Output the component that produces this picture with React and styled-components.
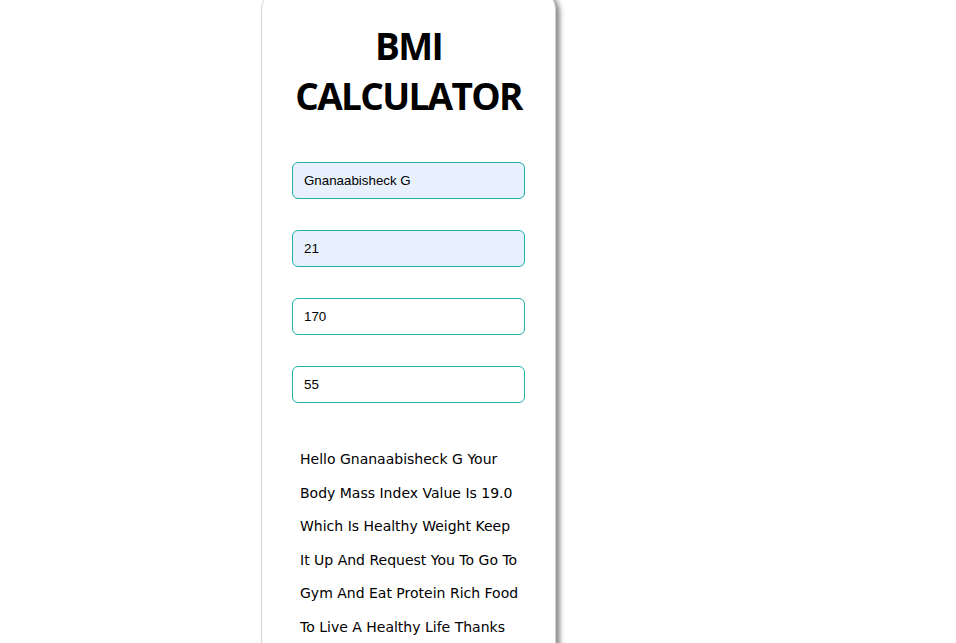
import React from "react";
import styled, { createGlobalStyle } from "styled-components";

const GlobalStyle = createGlobalStyle`
  html, body {
    margin: 0;
    padding: 0;
    background: #fff;
    overflow: hidden;
  }
`;

const fields = [
  { value: "Gnanaabisheck G", filled: true },
  { value: "21", filled: true },
  { value: "170", filled: false },
  { value: "55", filled: false },
];

const resultLines = [
  "Hello Gnanaabisheck G Your",
  "Body Mass Index Value Is 19.0",
  "Which Is Healthy Weight Keep",
  "It Up And Request You To Go To",
  "Gym And Eat Protein Rich Food",
  "To Live A Healthy Life Thanks",
];

const App = () => {
  return (
    <>
      <GlobalStyle />
      <Card>
        <Title>
          BMI
          <br />
          CALCULATOR
        </Title>
        <Form>
          {fields.map((f, i) => (
            <Field key={i} $filled={f.filled} defaultValue={f.value} />
          ))}
        </Form>
        <Result>
          {resultLines.map(line => (
            <Line key={line}>{line}</Line>
          ))}
        </Result>
      </Card>
    </>
  );
};

export default App;

const Card = styled.div`
  box-sizing: border-box;
  width: 295px;
  height: 700px;
  margin: -12px 0 0 261px;
  padding: 32px 30px 0 30px;
  background: #fff;
  border: 1px solid #d6d6d6;
  border-radius: 22px;
  box-shadow: 4px 3px 5px rgba(0, 0, 0, 0.45);
`;

const Title = styled.h1`
  margin: 0 -20px;
  text-align: center;
  font-family: "Open Sans", "Noto Sans", sans-serif;
  font-weight: 700;
  font-size: 37px;
  letter-spacing: -1.7px;
  line-height: 50px;
  color: #000;
`;

const Form = styled.div`
  display: flex;
  flex-direction: column;
  gap: 31px;
  margin-top: 41px;
`;

const Field = styled.input`
  box-sizing: border-box;
  width: 233px;
  height: 37px;
  padding: 0 11px;
  border: 1px solid #20b2aa;
  border-radius: 6px;
  outline: none;
  background: ${props => (props.$filled ? "#e8f0fe" : "#fff")};
  font-family: "Liberation Sans", Arial, sans-serif;
  font-size: 13.33px;
  color: #000;
`;

const Result = styled.div`
  margin-top: 40px;
  padding-left: 8px;
  font-family: "DejaVu Sans", Verdana, sans-serif;
  font-size: 14px;
  line-height: 33.6px;
  color: #000;
`;

const Line = styled.div`
  white-space: nowrap;
`;
